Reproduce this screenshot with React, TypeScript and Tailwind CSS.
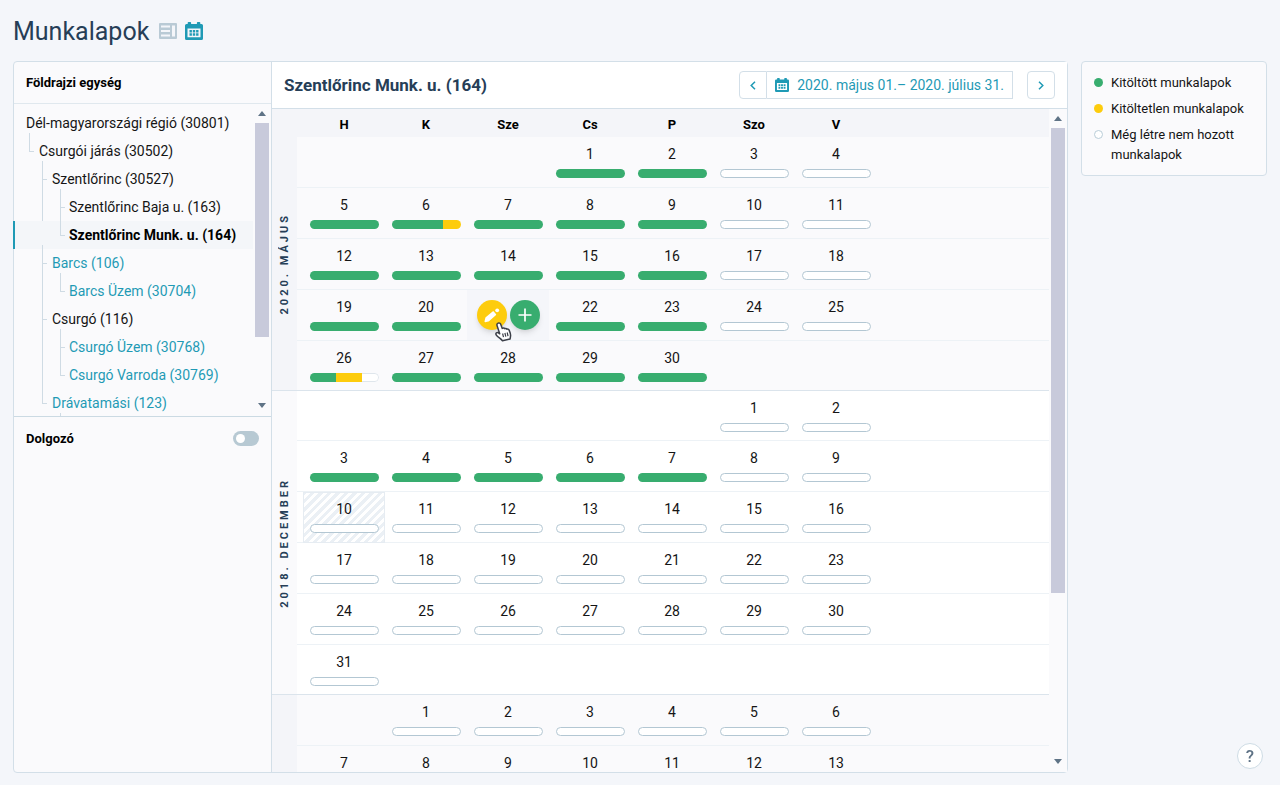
import React from "react";

type Fill = "full" | "none" | "mixed" | "partial";
type Day = { n: number; fill: Fill; state?: "hover" | "today" };
type Cell = Day | null;

const WEEKDAYS = ["H", "K", "Sze", "Cs", "P", "Szo", "V"];

const d = (n: number, fill: Fill = "none", state?: Day["state"]): Day => ({ n, fill, state });
const week = (from: number, fills: string): Cell[] =>
  fills.split("").map((f, i) => {
    if (f === "_") return null;
    return d(from + i, f === "f" ? "full" : f === "m" ? "mixed" : f === "p" ? "partial" : "none");
  });

const MAY: Cell[][] = [
  week(-2, "___ffoo"),
  week(5, "fmfffoo"),
  week(12, "fffffoo"),
  [d(19, "full"), d(20, "full"), d(21, "full", "hover"), d(22, "full"), d(23, "full"), d(24), d(25)],
  week(26, "pffff__"),
];

const DECEMBER: Cell[][] = [
  week(-4, "_____oo"),
  week(3, "fffffoo"),
  [d(10, "none", "today"), ...week(11, "oooooo")],
  week(17, "ooooooo"),
  week(24, "ooooooo"),
  week(31, "o______"),
];

const NEXT: Cell[][] = [week(0, "_oooooo"), week(7, "ooooooo")];

type Node = {
  label: string;
  link?: boolean;
  selected?: boolean;
  more?: boolean;
  children?: Node[];
};

const TREE: Node[] = [
  {
    label: "Dél-magyarországi régió (30801)",
    children: [
      {
        label: "Csurgói járás (30502)",
        children: [
          {
            label: "Szentlőrinc (30527)",
            children: [
              { label: "Szentlőrinc Baja u. (163)" },
              { label: "Szentlőrinc Munk. u. (164)", selected: true },
            ],
          },
          { label: "Barcs (106)", link: true, children: [{ label: "Barcs Üzem (30704)", link: true }] },
          {
            label: "Csurgó (116)",
            children: [
              { label: "Csurgó Üzem (30768)", link: true },
              { label: "Csurgó Varroda (30769)", link: true },
            ],
          },
          { label: "Drávatamási (123)", link: true, more: true },
        ],
      },
    ],
  },
];

const INDENT = ["pl-3", "pl-[25px]", "pl-[38px]", "pl-[55px]"];
const LINE_LEFT = ["", "left-[15px]", "left-7", "left-[46px]"];

function CalendarIcon({ className }: { className: string }) {
  return (
    <svg viewBox="0 0 18 18" className={className} aria-hidden="true">
      <path
        fill="currentColor"
        fillRule="evenodd"
        d="M3.500 0h1.800a.8.800 0 0 1 .8.800V2h5.800V.8a.8.800 0 0 1 .8-.8h1.800a.8.800 0 0 1 .8.800V2h1.200A1.500 1.500 0 0 1 18 3.500v13a1.500 1.500 0 0 1-1.500 1.500h-15A1.500 1.500 0 0 1 0 16.500v-13A1.500 1.500 0 0 1 1.500 2h1.200V.8a.8.800 0 0 1 .8-.8zM2.500 6.500v8.800h13V6.500z"
      />
      <path
        fill="currentColor"
        d="M4.500 8h2.400v2.400H4.500zM7.800 8h2.400v2.400H7.800zM11.100 8h2.400v2.400h-2.400zM4.500 11.300h2.400v2.400H4.500zM7.800 11.300h2.400v2.400H7.800zM11.100 11.300h2.400v2.400h-2.400z"
      />
    </svg>
  );
}

function ListIcon() {
  return (
    <svg viewBox="0 0 18 16" className="h-4 w-[18px]" aria-hidden="true">
      <path
        fill="currentColor"
        fillRule="evenodd"
        d="M1 0h16a1 1 0 0 1 1 1v14a1 1 0 0 1-1 1H1a1 1 0 0 1-1-1V1a1 1 0 0 1 1-1zM2 2.500v2h9v-2zM2 7v2h9V7zM2 11.500v2h9v-2zM13 2.500v11h3v-11z"
      />
    </svg>
  );
}

function HandCursor() {
  return (
    <svg
      viewBox="0 0 18 20"
      className="pointer-events-none absolute left-[27px] top-8 z-10 h-5 w-[18px]"
      aria-hidden="true"
    >
      <path
        d="M4 1.200c1.100-.6 2.300 0 2.700 1l1.600 4.200c.7-.6 1.800-.5 2.300.3.700-.5 1.700-.3 2.200.5.900-.4 1.900 0 2.300.9.700 1.700 1.500 3.400 1.500 5.200 0 1.500-.4 2.200-.5 3.700l-7.600 1.800c-1.200-1.800-3.700-3-5.900-5.400-1-1.100-.9-2.100-.2-2.600.9-.6 2.200.1 3.300 1L3.100 3.700C2.700 2.700 3 1.700 4 1.200z"
        fill="#fff"
        stroke="#3c3f48"
        strokeWidth="1.500"
        strokeLinejoin="round"
      />
      <path d="M8.600 11.500l.9 3.700M10.900 11l.9 3.700M13.200 10.500l.8 3.600" stroke="#3c3f48" strokeWidth="1.200" />
    </svg>
  );
}

function TreeItem({ node, depth, last }: { node: Node; depth: number; last: boolean }) {
  const tone = node.selected
    ? "bg-[#f4f6f9] font-bold text-black"
    : node.link
      ? "text-[#1f9ab5]"
      : "text-[#151515]";
  return (
    <li className="relative">
      {node.selected && <span className="absolute -left-px top-0 h-7 w-0.5 bg-[#1f9ab5]" />}
      <button
        type="button"
        className={`block h-7 w-full whitespace-nowrap text-left text-sm leading-7 ${INDENT[depth]} ${tone}`}
      >
        {node.label}
      </button>
      {depth > 0 && (
        <>
          <span
            className={`absolute -top-1 w-px bg-[#cfdbe4] ${LINE_LEFT[depth]} ${last ? "h-[18px]" : "bottom-0"}`}
          />
          <span className={`absolute top-3.5 h-px w-[5px] bg-[#cfdbe4] ${LINE_LEFT[depth]}`} />
        </>
      )}
      {node.more && <span className="absolute left-[46px] top-6 h-7 w-px bg-[#cfdbe4]" />}
      {node.children && (
        <ul>
          {node.children.map((c, i) => (
            <TreeItem key={c.label} node={c} depth={depth + 1} last={i === node.children!.length - 1} />
          ))}
        </ul>
      )}
    </li>
  );
}

function Bar({ fill }: { fill: Fill }) {
  if (fill === "full") return <span className="block h-[9px] w-[69px] rounded-full bg-[#38ad6f]" />;
  if (fill === "mixed")
    return (
      <span className="flex h-[9px] w-[69px] overflow-hidden rounded-full">
        <span className="w-3/4 bg-[#38ad6f]" />
        <span className="w-1/4 bg-[#fdcc0d]" />
      </span>
    );
  if (fill === "partial")
    return (
      <span className="flex h-[9px] w-[69px] overflow-hidden rounded-full">
        <span className="w-[26px] bg-[#38ad6f]" />
        <span className="w-[26px] bg-[#fdcc0d]" />
        <span className="flex-1 rounded-r-full border border-l-0 border-[#dfe6ec] bg-white" />
      </span>
    );
  return <span className="block h-[9px] w-[69px] rounded-full border border-[#b3c7d3] bg-white" />;
}

function HoverActions() {
  return (
    <div className="relative flex h-[50px] items-center justify-center gap-[3px]">
      <button
        type="button"
        aria-label="Szerkesztés"
        className="flex size-[30px] items-center justify-center rounded-full bg-[#fdcc0d] text-white shadow-md"
      >
        <svg viewBox="0 0 16 16" className="size-4" fill="currentColor" aria-hidden="true">
          <path d="M1.200 15.200c-.5 0-.8-.4-.7-.9l.8-3.300c.1-.3.200-.5.400-.7L8.600 4.600c.4-.4 1-.4 1.400.1l1.900 2.200c.4.4.3 1-.1 1.400L5 14.200c-.2.200-.5.300-.7.400z" />
          <circle cx="13.200" cy="3.300" r="1.900" />
        </svg>
      </button>
      <button
        type="button"
        aria-label="Hozzáadás"
        className="flex size-[30px] items-center justify-center rounded-full bg-[#38ad6f] text-white shadow-md"
      >
        <svg viewBox="0 0 14 14" className="size-3.5" stroke="currentColor" strokeWidth="1.700" aria-hidden="true">
          <path d="M7 .5v13M.5 7h13" />
        </svg>
      </button>
      <HandCursor />
    </div>
  );
}

function DayCell({ day, border }: { day: Cell; border: string }) {
  const bg =
    day?.state === "hover"
      ? "bg-[#f5f6fa]"
      : day?.state === "today"
        ? "bg-[repeating-linear-gradient(135deg,#ebf0f5_0px,#ebf0f5_3px,#ffffff_3px,#ffffff_6px)] outline outline-1 -outline-offset-1 outline-[#e6ecf2]"
        : "";
  return (
    <td className={`p-0 align-top ${border} ${bg}`}>
      {day?.state === "hover" ? (
        <HoverActions />
      ) : (
        day && (
          <div className="flex flex-col items-center pt-2">
            <span className="mb-1.5 text-sm leading-[18px]">{day.n}</span>
            <Bar fill={day.fill} />
          </div>
        )
      )}
    </td>
  );
}

function Month({
  name,
  weeks,
  tinted,
  open,
  compact,
}: {
  name?: string;
  weeks: Cell[][];
  tinted?: boolean;
  open?: boolean;
  compact?: boolean;
}) {
  return (
    <tbody className={tinted ? "bg-[#fafafc]" : "bg-white"}>
      {weeks.map((w, i) => {
        const first = i === 0;
        const last = i === weeks.length - 1 && !open;
        const border = last ? "border-b border-[#dbe4ec]" : "border-b border-[#edf2f6]";
        return (
          <tr key={i} className={last || (first && compact) ? "h-[50px]" : "h-[51px]"}>
            {first && (
              <th
                scope="rowgroup"
                rowSpan={weeks.length}
                className={`border-b border-[#dbe4ec] p-0 ${tinted ? "bg-[#f4f5f9]" : "bg-[#fafafc]"}`}
              >
                {name && (
                  <span className="inline-block rotate-180 whitespace-nowrap align-middle text-[11px] leading-4 font-bold tracking-[3px] text-[#263e57] uppercase [writing-mode:vertical-rl]">
                    {name}
                  </span>
                )}
              </th>
            )}
            <td className={`p-0 ${border}`} />
            {w.map((c, j) => (
              <DayCell key={j} day={c} border={border} />
            ))}
            <td className={`p-0 ${border}`} />
          </tr>
        );
      })}
    </tbody>
  );
}

function Scrollbar({ thumb }: { thumb: string }) {
  return (
    <div className="flex w-[18px] shrink-0 flex-col items-center bg-[#fafafc]" aria-hidden="true">
      <svg viewBox="0 0 8 5" className="mt-[7px] mb-[7px] h-[5px] w-2 shrink-0 fill-[#5f7386]">
        <path d="M0 5l4-5 4 5z" />
      </svg>
      <div className={`w-3.5 bg-[#c8cadb] ${thumb}`} />
      <svg viewBox="0 0 8 5" className="mt-auto mb-2 h-[5px] w-2 shrink-0 fill-[#5f7386]">
        <path d="M0 0l4 5 4-5z" />
      </svg>
    </div>
  );
}

export default function App() {
  return (
    <div className="flex h-screen flex-col bg-[#f4f6fa] px-[13px] pb-3 font-[Roboto,sans-serif] text-[#151515]">
      <header className="flex h-[61px] shrink-0 items-center gap-2">
        <h1 className="mr-0.5 pt-0.5 text-[25px] leading-8 text-[#263e57]">Munkalapok</h1>
        <button type="button" aria-label="Lista nézet" className="text-[#b9cad5]">
          <ListIcon />
        </button>
        <button type="button" aria-label="Naptár nézet" className="text-[#1f9ab5]">
          <CalendarIcon className="size-[18px]" />
        </button>
      </header>

      <div className="flex min-h-0 flex-1 items-start gap-[13px]">
        <div className="flex h-full min-w-0 flex-1 rounded-sm border border-[#d3dfe8] bg-[#fafafc]">
          <aside className="flex w-[258px] shrink-0 flex-col border-r border-[#d3dfe8]">
            <h2 className="h-[42px] shrink-0 border-b border-[#e0e8ee] pl-3 text-[13px] leading-[42px] font-bold text-black">
              Földrajzi egység
            </h2>
            <div className="flex h-[313px] shrink-0 border-b border-[#cbdae3]">
              <nav className="h-full min-w-0 flex-1 pt-[5px]" aria-label="Földrajzi egység">
                <ul className="h-full [clip-path:inset(0_0_0_-1px)]">
                  {TREE.map((n) => (
                    <TreeItem key={n.label} node={n} depth={0} last />
                  ))}
                </ul>
              </nav>
              <Scrollbar thumb="h-[214px]" />
            </div>
            <label className="flex h-[43px] items-center justify-between pr-3 pl-3 text-[13px] font-bold text-black">
              Dolgozó
              <input
                type="checkbox"
                className="h-[15px] w-[26px] appearance-none rounded-full bg-[#b7c9d3] p-[3px] before:block before:size-[9px] before:rounded-full before:bg-white"
              />
            </label>
          </aside>

          <main className="flex min-w-0 flex-1 flex-col">
            <div className="flex h-[47px] shrink-0 items-center justify-between border-b border-[#d3dfe8] bg-white pr-3 pl-3">
              <h2 className="text-[17px] leading-6 font-bold text-[#263e57]">Szentlőrinc Munk. u. (164)</h2>
              <div className="flex h-7 text-[#1f9ab5]">
                <button
                  type="button"
                  aria-label="Előző"
                  className="flex w-7 items-center justify-center rounded-l-sm border border-[#d3dfe8] bg-white"
                >
                  <svg viewBox="0 0 6 9" className="h-[9px] w-1.5" fill="none" stroke="currentColor" strokeWidth="1.500">
                    <path d="M5 .7L1.200 4.500 5 8.300" />
                  </svg>
                </button>
                <button
                  type="button"
                  className="flex items-center gap-2 border border-l-0 border-[#d3dfe8] bg-white px-2 text-sm whitespace-nowrap"
                >
                  <CalendarIcon className="size-3.5" />
                  2020. május 01.– 2020. július 31.
                </button>
                <button
                  type="button"
                  aria-label="Következő"
                  className="ml-3.5 flex w-7 items-center justify-center rounded-sm border border-[#d3dfe8] bg-white"
                >
                  <svg viewBox="0 0 6 9" className="h-[9px] w-1.5" fill="none" stroke="currentColor" strokeWidth="1.500">
                    <path d="M1 .7l3.800 3.800L1 8.300" />
                  </svg>
                </button>
              </div>
            </div>
            <div className="flex min-h-0 flex-1">
              <div className="h-full min-w-0 flex-1 overflow-hidden">
                <table className="w-full table-fixed border-separate border-spacing-0">
                  <colgroup>
                    <col className="w-[25px]" />
                    <col className="w-1.5" />
                    {WEEKDAYS.map((w) => (
                      <col key={w} className="w-[82px]" />
                    ))}
                    <col />
                  </colgroup>
                  <thead className="bg-[#f4f5f9]">
                    <tr className="h-7">
                      <td className="p-0" />
                      <td className="p-0" />
                      {WEEKDAYS.map((w) => (
                        <th key={w} scope="col" className="p-0 pt-1 text-[13px] leading-5 font-bold text-black">
                          {w}
                        </th>
                      ))}
                      <td className="p-0" />
                    </tr>
                  </thead>
                  <Month name="2020. május" weeks={MAY} tinted />
                  <Month name="2018. december" weeks={DECEMBER} compact />
                  <Month weeks={NEXT} tinted open />
                </table>
              </div>
              <Scrollbar thumb="h-[465px]" />
            </div>
          </main>
        </div>

        <ul className="flex w-[186px] shrink-0 flex-col gap-1.5 rounded-sm border border-[#d3dfe8] bg-[#fafafc] px-3 pt-[11px] pb-2.5 text-[13px] leading-5">
          <li className="flex gap-2">
            <span className="mt-[5px] size-[9px] shrink-0 rounded-full bg-[#38ad6f]" />
            Kitöltött munkalapok
          </li>
          <li className="flex gap-2">
            <span className="mt-[5px] size-[9px] shrink-0 rounded-full bg-[#fdcc0d]" />
            Kitöltetlen munkalapok
          </li>
          <li className="flex gap-2">
            <span className="mt-[5px] size-[9px] shrink-0 rounded-full border border-[#b9cdd8] bg-white" />
            Még létre nem hozott munkalapok
          </li>
        </ul>
      </div>

      <button
        type="button"
        aria-label="Súgó"
        className="fixed right-[17px] bottom-4 size-[26px] rounded-full border border-[#cddbe4] bg-white text-[17px] leading-6 font-medium text-[#5f7386]"
      >
        ?
      </button>
    </div>
  );
}
